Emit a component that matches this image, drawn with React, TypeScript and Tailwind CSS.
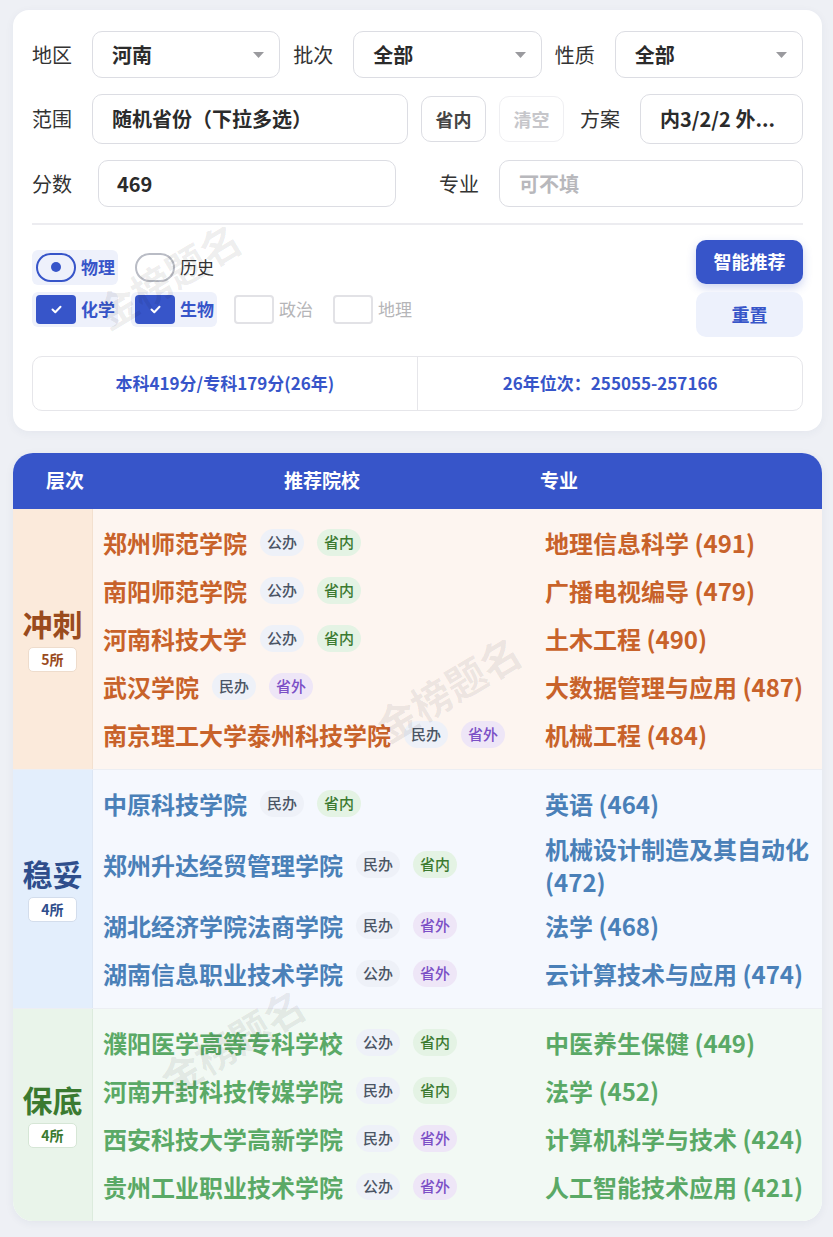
import React from "react";

const FONT = { fontFamily: '"Noto Sans CJK SC", "Noto Sans", sans-serif' };

type Tier = {
  name: string;
  count: string;
  tierBg: string;
  tierText: string;
  badgeBorder: string;
  bodyBg: string;
  text: string;
  divider: string;
  rows: { school: string; tags: string[]; major: string }[];
};

const tiers: Tier[] = [
  {
    name: "冲刺",
    count: "5所",
    tierBg: "bg-[#fbeadb]",
    tierText: "text-[#9a4b1d]",
    badgeBorder: "border-[#eedccc]",
    bodyBg: "bg-[#fdf5f0]",
    text: "text-[#c8622a]",
    divider: "border-[#f3e0cf]",
    rows: [
      { school: "郑州师范学院", tags: ["公办", "省内"], major: "地理信息科学 (491)" },
      { school: "南阳师范学院", tags: ["公办", "省内"], major: "广播电视编导 (479)" },
      { school: "河南科技大学", tags: ["公办", "省内"], major: "土木工程 (490)" },
      { school: "武汉学院", tags: ["民办", "省外"], major: "大数据管理与应用 (487)" },
      { school: "南京理工大学泰州科技学院", tags: ["民办", "省外"], major: "机械工程 (484)" },
    ],
  },
  {
    name: "稳妥",
    count: "4所",
    tierBg: "bg-[#e3eefc]",
    tierText: "text-[#2f4e8c]",
    badgeBorder: "border-[#d3ddec]",
    bodyBg: "bg-[#f5f8fe]",
    text: "text-[#4a80b8]",
    divider: "border-[#dce6f4]",
    rows: [
      { school: "中原科技学院", tags: ["民办", "省内"], major: "英语 (464)" },
      { school: "郑州升达经贸管理学院", tags: ["民办", "省内"], major: "机械设计制造及其自动化 (472)" },
      { school: "湖北经济学院法商学院", tags: ["民办", "省外"], major: "法学 (468)" },
      { school: "湖南信息职业技术学院", tags: ["公办", "省外"], major: "云计算技术与应用 (474)" },
    ],
  },
  {
    name: "保底",
    count: "4所",
    tierBg: "bg-[#e9f4ea]",
    tierText: "text-[#3b7a30]",
    badgeBorder: "border-[#d6e6d6]",
    bodyBg: "bg-[#f2f9f4]",
    text: "text-[#5aa966]",
    divider: "border-[#dcebdd]",
    rows: [
      { school: "濮阳医学高等专科学校", tags: ["公办", "省内"], major: "中医养生保健 (449)" },
      { school: "河南开封科技传媒学院", tags: ["民办", "省内"], major: "法学 (452)" },
      { school: "西安科技大学高新学院", tags: ["民办", "省外"], major: "计算机科学与技术 (424)" },
      { school: "贵州工业职业技术学院", tags: ["公办", "省外"], major: "人工智能技术应用 (421)" },
    ],
  },
];

const tagStyles: Record<string, string> = {
  公办: "bg-[#eef1f8] text-[#4b5565]",
  民办: "bg-[#eef1f8] text-[#4b5565]",
  省内: "bg-[#e4f3e4] text-[#3b7a30]",
  省外: "bg-[#eee6f7] text-[#7b4fc6]",
};

function Caret() {
  return (
    <svg width="11" height="6" viewBox="0 0 11 6" className="shrink-0">
      <path d="M0 0 L11 0 L5.5 6 Z" fill="#9a9a9e" />
    </svg>
  );
}

function Select({ value, className = "" }: { value: string; className?: string }) {
  return (
    <div
      className={`flex h-[47px] items-center justify-between rounded-[10px] border-[1.5px] border-[#dcdde3] bg-white pl-[19px] pr-[15px] ${className}`}
    >
      <span className="text-[20px] font-bold text-[#2b2b2b]">{value}</span>
      <Caret />
    </div>
  );
}

function Label({ children }: { children: React.ReactNode }) {
  return <span className="shrink-0 text-[20px] text-[#333]">{children}</span>;
}

function CheckMark() {
  return (
    <svg width="11" height="9" viewBox="0 0 11 9">
      <path d="M1.5 4.5 L4.3 7.2 L9.5 1.8" fill="none" stroke="#fff" strokeWidth="2" strokeLinecap="round" strokeLinejoin="round" />
    </svg>
  );
}

function Radio({ label, checked }: { label: string; checked?: boolean }) {
  return (
    <div
      className={`flex h-[35px] items-center gap-[5px] rounded-[6px] pl-[4px] pr-[3px] ${checked ? "bg-[#eef1fb]" : ""}`}
    >
      <span
        className={`flex h-[29px] w-[40px] items-center justify-center rounded-full ${
          checked ? "border-[2.5px] border-[#3755c9]" : "border-2 border-[#b9bcc5]"
        }`}
      >
        {checked && <span className="h-[10px] w-[10px] rounded-full bg-[#3755c9]" />}
      </span>
      <span className={`text-[17px] ${checked ? "font-bold text-[#3755c9]" : "text-[#333]"}`}>{label}</span>
    </div>
  );
}

function Check({ label, checked }: { label: string; checked?: boolean }) {
  return (
    <div
      className={`flex h-[35px] items-center gap-[5px] rounded-[6px] pl-[4px] pr-[3px] ${checked ? "bg-[#eef1fb]" : ""}`}
    >
      <span
        className={`flex h-[29px] w-[40px] items-center justify-center rounded-[4px] ${
          checked ? "bg-[#3755c9]" : "border-2 border-[#e2e2e6] bg-white"
        }`}
      >
        {checked && <CheckMark />}
      </span>
      <span className={`text-[17px] ${checked ? "font-bold text-[#3755c9]" : "text-[#b5b5b8]"}`}>{label}</span>
    </div>
  );
}

function Watermark({ className }: { className: string }) {
  return (
    <div
      className={`pointer-events-none absolute -translate-x-1/2 -translate-y-1/2 rotate-[-31deg] whitespace-nowrap text-[40px] font-bold text-black/[0.07] ${className}`}
    >
      金榜题名
    </div>
  );
}

function FilterCard() {
  return (
    <div className="relative rounded-[16px] bg-white px-[19px] pb-[20px] pt-[21px] shadow-[0_2px_10px_rgba(40,50,90,0.05)]">
      {/* selects: region / batch / type */}
      <div className="flex items-center gap-[13px]">
        {[
          ["地区", "河南"],
          ["批次", "全部"],
          ["性质", "全部"],
        ].map(([l, v]) => (
          <div key={l} className="flex flex-1 items-center gap-[20px]">
            <Label>{l}</Label>
            <Select value={v} className="flex-1" />
          </div>
        ))}
      </div>

      {/* range row */}
      <div className="mt-[16px] flex items-center">
        <Label>范围</Label>
        <div className="ml-[20px] flex h-[50px] w-[316px] items-center rounded-[10px] border-[1.5px] border-[#dcdde3] pl-[19px]">
          <span className="text-[20px] font-bold text-[#2b2b2b]">随机省份（下拉多选）</span>
        </div>
        <button className="ml-[13px] flex h-[46px] w-[65px] items-center justify-center rounded-[10px] border-[1.5px] border-[#dcdde3] bg-white text-[18px] font-bold text-[#444]">
          省内
        </button>
        <button className="ml-[13px] flex h-[46px] w-[65px] items-center justify-center rounded-[10px] border-[1.5px] border-[#efeff2] bg-white text-[18px] font-bold text-[#c6c6ca]">
          清空
        </button>
        <span className="ml-[16px]">
          <Label>方案</Label>
        </span>
        <div className="ml-[20px] flex h-[50px] flex-1 items-center rounded-[10px] border-[1.5px] border-[#dcdde3] pl-[19px]">
          <span className="text-[20px] font-bold text-[#2b2b2b]">内3/2/2 外...</span>
        </div>
      </div>

      {/* score / major row */}
      <div className="mt-[16px] flex items-center">
        <Label>分数</Label>
        <div className="ml-[26px] flex h-[47px] w-[298px] items-center rounded-[10px] border-[1.5px] border-[#dcdde3] pl-[18px]">
          <span className="text-[20px] font-bold text-[#2b2b2b]">469</span>
        </div>
        <span className="ml-[43px]">
          <Label>专业</Label>
        </span>
        <div className="ml-[20px] flex h-[47px] flex-1 items-center rounded-[10px] border-[1.5px] border-[#dcdde3] pl-[19px]">
          <span className="text-[20px] font-bold text-[#b8b8bc]">可不填</span>
        </div>
      </div>

      <div className="mt-[16px] h-[1.5px] bg-[#ececf0]" />

      {/* subjects + actions */}
      <div className="mt-[15px] flex items-center justify-between">
        <div className="flex flex-col gap-[7px]">
          <div className="flex items-center gap-[13px]">
            <Radio label="物理" checked />
            <Radio label="历史" />
          </div>
          <div className="flex items-center gap-[13px]">
            <Check label="化学" checked />
            <Check label="生物" checked />
            <Check label="政治" />
            <Check label="地理" />
          </div>
        </div>
        <div className="flex w-[107px] flex-col gap-[8px]">
          <button className="h-[44px] rounded-[10px] bg-[#3755c9] text-[18px] font-bold text-white shadow-[0_4px_10px_rgba(55,85,201,0.25)]">
            智能推荐
          </button>
          <button className="h-[45px] rounded-[10px] bg-[#edf1fc] text-[18px] font-bold text-[#3755c9]">
            重置
          </button>
        </div>
      </div>

      {/* score lines */}
      <div className="mt-[19px] flex h-[55px] rounded-[10px] border-[1.5px] border-[#e6e6ea]">
        <div className="flex flex-1 items-center justify-center text-[17px] font-bold text-[#3755c9]">
          本科419分/专科179分(26年)
        </div>
        <div className="w-[1.5px] bg-[#e6e6ea]" />
        <div className="flex flex-1 items-center justify-center text-[17px] font-bold text-[#3755c9]">
          26年位次：255055-257166
        </div>
      </div>

      <Watermark className="left-[155px] top-[265px]" />
    </div>
  );
}

function ResultTable() {
  return (
    <div className="relative mt-[22px] overflow-hidden rounded-[20px] bg-white shadow-[0_2px_10px_rgba(40,50,90,0.06)]">
      <div className="flex h-[56px] items-center bg-[#3755c9] text-[19px] font-bold text-white">
        <div className="w-[104px] text-center">层次</div>
        <div className="w-[410px] text-center">推荐院校</div>
        <div className="pl-[13px]">专业</div>
      </div>

      {tiers.map((t, i) => (
        <div key={t.name} className={`flex ${i > 0 ? "border-t-[1.5px] border-[#eceef3]" : ""}`}>
          <div
            className={`flex w-[80px] shrink-0 flex-col items-center justify-center border-r-[1.5px] ${t.divider} ${t.tierBg}`}
          >
            <div className={`text-[30px] font-bold leading-[36px] ${t.tierText}`}>{t.name}</div>
            <div
              className={`mt-[6px] flex h-[25px] w-[49px] items-center justify-center rounded-[5px] border-[1.5px] bg-white text-[14px] font-bold ${t.badgeBorder} ${t.tierText}`}
            >
              {t.count}
            </div>
          </div>
          <div className={`flex-1 py-[10px] ${t.bodyBg}`}>
            {t.rows.map((r) => (
              <div key={r.school} className="grid min-h-[48px] grid-cols-[442px_1fr] items-center">
                <div className="flex items-center gap-[13px] pl-[10px]">
                  <span className={`text-[24px] font-bold leading-[33px] ${t.text}`}>{r.school}</span>
                  {r.tags.map((g) => (
                    <span
                      key={g}
                      className={`flex h-[27px] items-center rounded-full px-[7px] text-[15px] font-medium ${tagStyles[g]}`}
                    >
                      {g}
                    </span>
                  ))}
                </div>
                <div className={`py-[4px] pl-[10px] pr-[8px] text-[24px] font-bold leading-[33px] ${t.text}`}>
                  {r.major}
                </div>
              </div>
            ))}
          </div>
        </div>
      ))}

      <Watermark className="left-[435px] top-[235px]" />
      <Watermark className="left-[219px] top-[588px]" />
    </div>
  );
}

export default function App() {
  return (
    <div className="min-h-screen bg-[#eef0f5] pb-[15px] pl-[13px] pr-[11px] pt-[10px]" style={FONT}>
      <FilterCard />
      <ResultTable />
    </div>
  );
}
